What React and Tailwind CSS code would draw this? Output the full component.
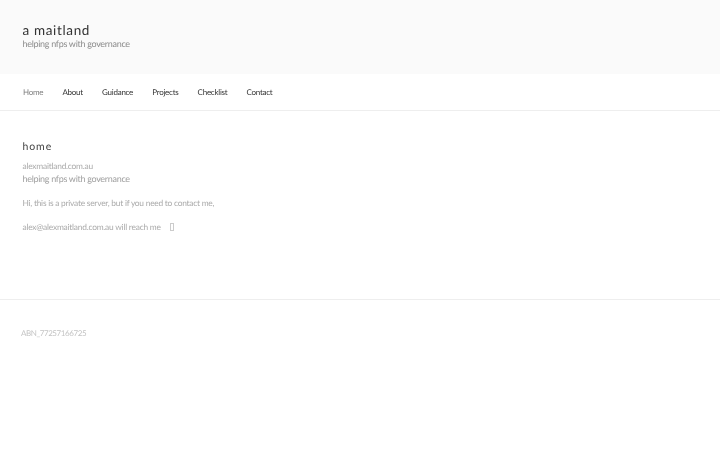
export default function App() {
  const nav = ["About", "Guidance", "Projects", "Checklist", "Contact"];
  return (
    <div className="h-[450px] overflow-hidden bg-white font-['Lato','Liberation_Sans',sans-serif] text-[#999] font-light [text-rendering:geometricPrecision] [will-change:transform]">
      <header className="h-[74px] bg-[#fafafa] pl-[22.5px] pt-[22px]">
        <h1 className="text-[13.5px] leading-[16px] tracking-[0.65px] font-normal text-[#333]">a maitland</h1>
        <p className="text-[9px] leading-[12px] tracking-[-0.3px] font-normal text-[#8c8c8c]">helping nfps with governance</p>
      </header>
      <nav className="h-[37px] border-b border-[#eee] pl-[23px] flex items-center gap-[19.1px] text-[8px] tracking-[-0.25px] font-normal text-[#333]">
        <span className="text-[#808080]">Home</span>
        {nav.map((n) => <span key={n}>{n}</span>)}
      </nav>
      <main className="h-[189px] border-b border-[#eee] pl-[22.5px] pt-[30px]">
        <h2 className="text-[10.5px] leading-[12px] tracking-[0.9px] font-normal text-[#444]">home</h2>
        <p className="mt-[7px] text-[8.4px] leading-[12px] tracking-[-0.22px] font-normal text-[#aaa]">alexmaitland.com.au</p>
        <p className="text-[9px] leading-[13px] tracking-[-0.3px] font-normal text-[#a0a0a0]">helping nfps with governance</p>
        <p className="mt-[12px] text-[8.4px] leading-[12px] tracking-[-0.24px] font-normal text-[#aaa]">Hi, this is a private server, but if you need to contact me,</p>
        <p className="mt-[12px] text-[8.4px] leading-[12px] tracking-[-0.22px] font-normal text-[#aaa] flex items-center">
          alex@alexmaitland.com.au will reach me
          <span className="ml-[9.5px] inline-block w-[4px] h-[8px] border border-[#ccc]"></span>
        </p>
      </main>
      <footer className="pl-[21px] pt-[27px] text-[8px] leading-[12px] tracking-[-0.42px] font-normal text-[#c4c4c4]">ABN_77257166725</footer>
    </div>
  );
}
